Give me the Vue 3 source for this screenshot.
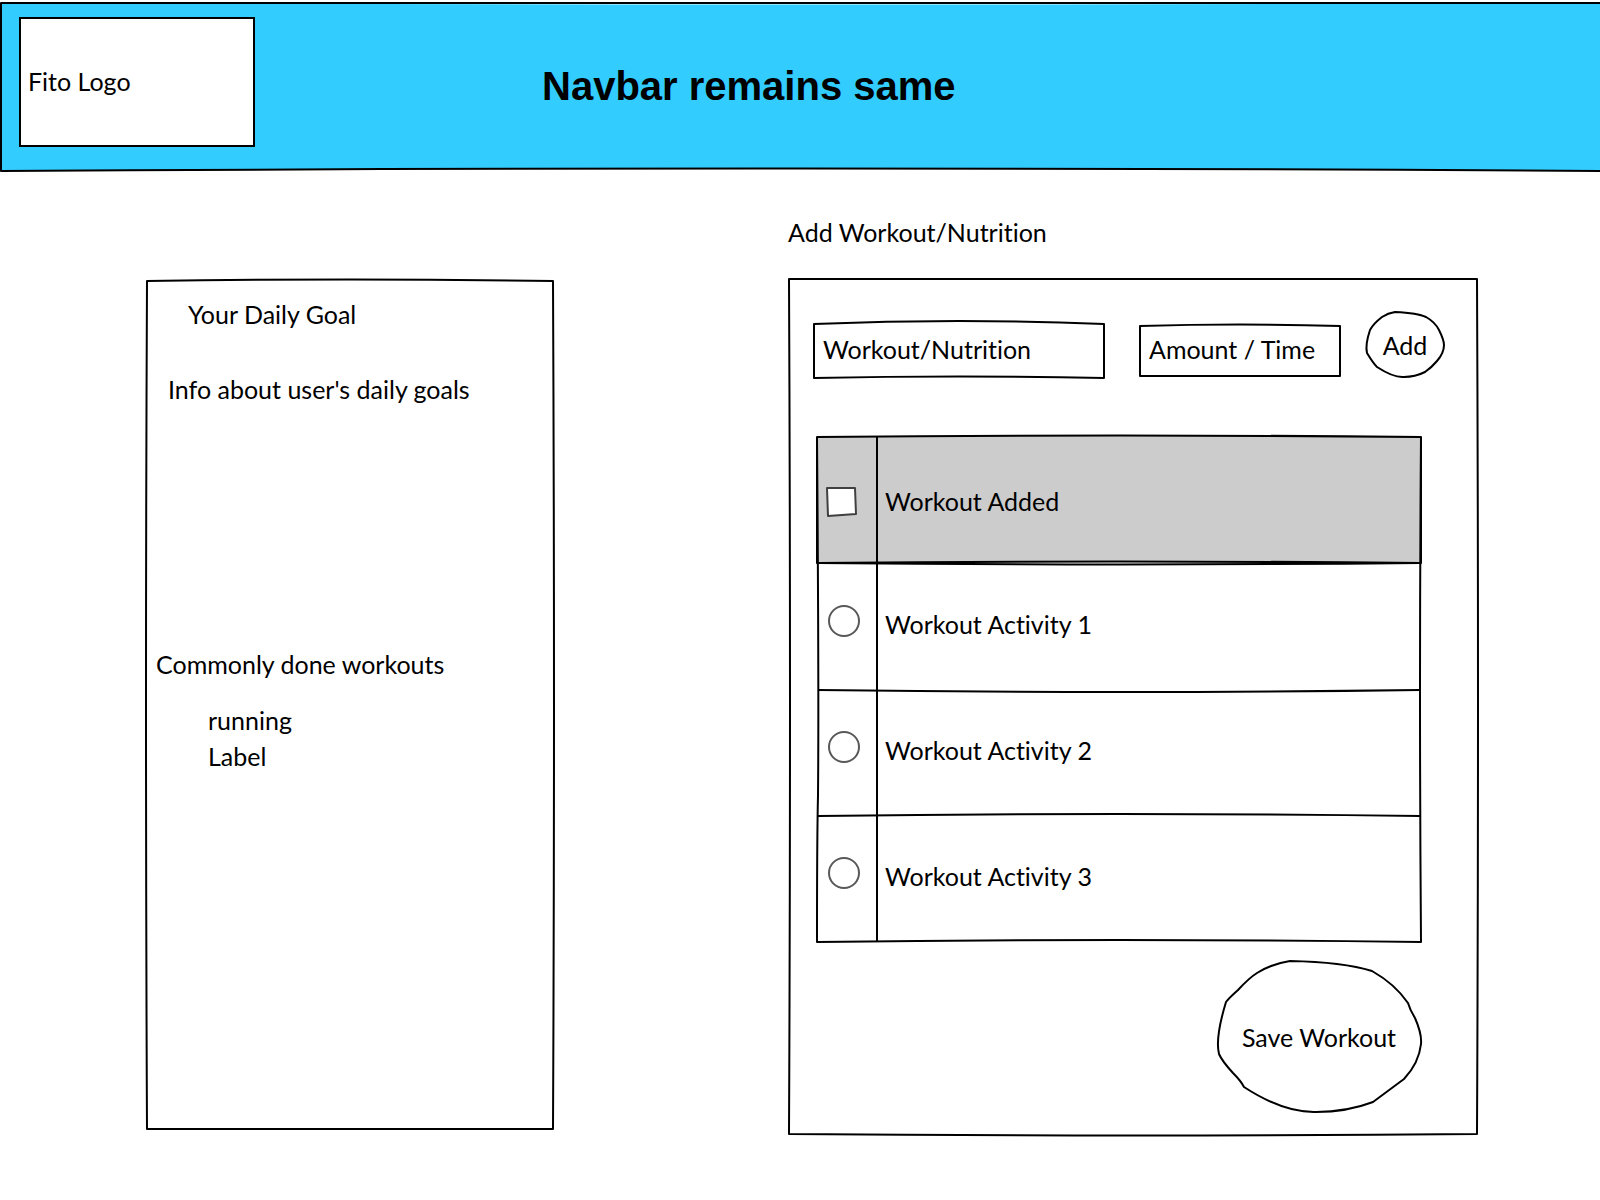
<script setup>
import { ref } from 'vue'

const workout = ref('Workout/Nutrition')
const amount = ref('Amount / Time')
const allAdded = ref(false)
const selected = ref('')

const common = ['running', 'Label']
const activities = [
  { id: 'activity-1', name: 'Workout Activity 1' },
  { id: 'activity-2', name: 'Workout Activity 2' },
  { id: 'activity-3', name: 'Workout Activity 3' }
]
</script>

<template>
  <div class="page">
    <header class="navbar">
      <svg class="sketch" viewBox="0 0 1600 172" preserveAspectRatio="none" aria-hidden="true">
        <path class="sky" d="M1 3 Q800 6 1602 3 V171 Q800 166 1 171 Z" />
      </svg>
      <a class="logo" href="#">Fito Logo</a>
      <h1 class="title">Navbar remains same</h1>
    </header>

    <main class="content">
      <aside class="goals">
        <svg class="sketch" viewBox="0 0 408 850" preserveAspectRatio="none" aria-hidden="true">
          <path d="M1 1 Q204 -2 407 1 Q409 425 407 849 H1 Q-1 425 1 1 Z" />
        </svg>
        <h2 class="goal-title">Your Daily Goal</h2>
        <p class="goal-info">Info about user's daily goals</p>
        <h2 class="common-title">Commonly done workouts</h2>
        <ul class="common">
          <li v-for="item in common" :key="item">{{ item }}</li>
        </ul>
      </aside>

      <section class="workouts">
        <h2>Add Workout/Nutrition</h2>
        <div class="panel">
          <svg class="sketch" viewBox="0 0 690 856" preserveAspectRatio="none" aria-hidden="true">
            <path d="M1 1 H689 Q691 428 689 855 Q345 858 1 855 Q3 428 1 1 Z" />
          </svg>

          <form class="entry" @submit.prevent>
            <div class="field">
              <svg class="sketch" viewBox="0 0 292 56" preserveAspectRatio="none" aria-hidden="true">
                <path d="M1 1 Q146 -5 291 1 V55 Q146 52 1 55 Z" />
              </svg>
              <input v-model="workout" type="text" aria-label="Workout or nutrition" />
            </div>
            <div class="field">
              <svg class="sketch" viewBox="0 0 202 56" preserveAspectRatio="none" aria-hidden="true">
                <path d="M1 3 Q101 0 201 3 V53 H1 Z" />
              </svg>
              <input v-model="amount" type="text" aria-label="Amount or time" />
            </div>
            <button class="round add" type="submit">
              <svg class="sketch" viewBox="0 0 80 67" preserveAspectRatio="none" aria-hidden="true">
                <path d="M30 1 Q53 2 61 6 Q70 11 74 19 Q79 29 79 34 Q79 42 72 50 Q67 56 60 61 Q50 66 39 66 Q29 67 12 56 Q8 52 2 42 Q0 34 5 19 Q8 13 17 6 Q23 2 30 1 Z" />
              </svg>
              <span>Add</span>
            </button>
          </form>

          <div class="list">
            <svg class="sketch" viewBox="0 0 606 507" preserveAspectRatio="none" aria-hidden="true">
              <path class="shade" d="M1 1 Q303 -2 605 1 V127 Q303 124 1 127 Z" />
              <path d="M1 127 Q303 130 604 127 M2 254 Q303 258 604 254 M2 380 Q303 376 604 380" />
              <path d="M1 1 Q3 254 2 360 Q1 400 1 506 Q303 502 605 506 Q603 254 605 1 M61 1 V506" />
            </svg>
            <table>
              <thead>
                <tr>
                  <td class="pick">
                    <span class="check">
                      <svg viewBox="0 0 32 32" aria-hidden="true">
                        <path d="M1 2 L29 2 L30 28 L2 30 Z" />
                        <path v-if="allAdded" d="M7 16 L13 23 L24 8" />
                      </svg>
                      <input id="all-added" v-model="allAdded" type="checkbox" />
                    </span>
                  </td>
                  <th scope="col"><label for="all-added">Workout Added</label></th>
                </tr>
              </thead>
              <tbody>
                <tr v-for="activity in activities" :key="activity.id">
                  <td class="pick">
                    <input :id="activity.id" v-model="selected" class="radio" type="radio" name="activity" :value="activity.id" />
                  </td>
                  <td class="name"><label :for="activity.id">{{ activity.name }}</label></td>
                </tr>
              </tbody>
            </table>
          </div>

          <button class="round save" type="button">
            <svg class="sketch" viewBox="0 0 206 153" preserveAspectRatio="none" aria-hidden="true">
              <path d="M74 1 Q127 2 156 11 Q179 24 192 43 Q194 50 199 58 Q206 74 205 84 Q203 103 188 119 L157 142 Q131 152 100 152 Q68 153 28 127 Q25 121 17 113 Q6 101 3 94 Q-1 78 10 42 Q13 38 22 30 Q33 18 41 13 Q55 4 74 1 Z" />
            </svg>
            <span>Save Workout</span>
          </button>
        </div>
      </section>
    </main>
  </div>
</template>

<style>
body {
  margin: 0;
  background: #fff;
}
</style>

<style scoped>
.page {
  box-sizing: border-box;
  min-height: 100vh;
  overflow: hidden;
  padding-bottom: 65px;
  color: #000;
  font: 25px/32px Lato, "Noto Sans", sans-serif;
  font-variant-ligatures: none;
}
.page * {
  box-sizing: border-box;
}
h1,
h2,
p,
ul {
  margin: 0;
  padding: 0;
}
h2 {
  font-size: 25px;
  font-weight: 400;
}
input,
button {
  margin: 0;
  padding: 0;
  border: 0;
  background: none;
  color: inherit;
  font: inherit;
}

/* Hand-drawn outlines stretched behind the box that holds them */
.sketch {
  position: absolute;
  inset: 0;
  z-index: -1;
  width: 100%;
  height: 100%;
  overflow: visible;
  pointer-events: none;
}
.sketch path {
  fill: none;
  stroke: #000;
  stroke-width: 2;
  stroke-linejoin: round;
  vector-effect: non-scaling-stroke;
}
.sketch .sky {
  fill: #33ccff;
}
.sketch .shade {
  fill: #ccc;
}
.navbar,
.goals,
.panel,
.field,
.list,
.round {
  position: relative;
  z-index: 0;
}

.navbar {
  display: flex;
  padding: 17px 0 25px 19px;
}
.logo {
  display: flex;
  align-items: center;
  width: 236px;
  height: 130px;
  padding: 0 0 2px 7px;
  border: 2px solid #000;
  background: #fff;
  color: inherit;
  text-decoration: none;
}
.title {
  align-self: center;
  margin-left: 287px;
  padding-top: 8px;
  font: bold 40px/48px "Liberation Sans", Arial, sans-serif;
}

.content {
  display: grid;
  grid-template-columns: 408fr 690fr;
  column-gap: 234px;
  padding: 44px 122px 0 146px;
}
.goals {
  min-height: 850px;
  margin: 64px 0 5px;
  padding-top: 18px;
}
.goal-title {
  padding-left: 42px;
}
.goal-info {
  margin-top: 43px;
  padding-left: 22px;
}
.common-title {
  margin-top: 243px;
  padding-left: 10px;
}
.common {
  display: grid;
  gap: 4px;
  margin-top: 24px;
  padding-left: 62px;
  list-style: none;
}

.panel {
  margin-top: 30px;
  padding-top: 33px;
  padding-bottom: 22px;
}
.entry {
  display: grid;
  grid-template-columns: 292fr 34fr 202fr 24fr 80fr;
  align-items: end;
  height: 68px;
  margin: 0 33px 0 25px;
}
.field:nth-child(2) {
  grid-column: 3;
}
.field {
  height: 56px;
}
.field input {
  display: block;
  width: 100%;
  height: 56px;
  padding: 0 10px 5px;
}
.round {
  display: grid;
  place-items: center;
}
.add {
  grid-column: 5;
  align-self: start;
  height: 67px;
}

.list {
  margin: 57px 56px 0 28px;
  padding-bottom: 3px;
}
table {
  width: 100%;
  border-collapse: collapse;
}
tr {
  height: 126px;
}
th,
td {
  padding: 0;
  text-align: left;
  vertical-align: middle;
  font-weight: 400;
}
th {
  padding: 4px 0 0 8px;
}
.name {
  padding: 0 0 2px 8px;
}
.pick {
  width: 61px;
  padding: 0 0 8px 12px;
}
thead .pick {
  padding: 6px 0 0 10px;
}
.check {
  display: grid;
  width: 32px;
  height: 32px;
}
.check > * {
  grid-area: 1 / 1;
  width: 32px;
  height: 32px;
}
.check input {
  appearance: none;
}
.check path {
  fill: #fff;
  stroke: #404040;
  stroke-width: 2;
  stroke-linejoin: round;
}
.check path + path {
  fill: none;
}
.radio {
  display: block;
  appearance: none;
  width: 32px;
  height: 32px;
  border: 2px solid #595959;
  border-radius: 50%;
}
.radio:checked {
  background: radial-gradient(circle, #595959 40%, transparent 45%);
}

.save {
  width: 206px;
  height: 153px;
  margin: 17px 56px 0 auto;
}
</style>
